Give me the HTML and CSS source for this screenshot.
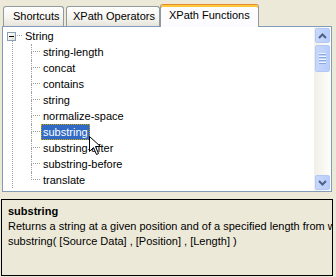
FILE: index.html
```
<!DOCTYPE html>
<html>
<head>
    <title>XPath Builder</title>
    <link rel="stylesheet" href="styles.css">
</head>
<body>

    <!-- Tabs -->
    <div class="tabs">
        <div class="tab tab-short">Shortcuts</div>
        <div class="tab tab-ops">XPath Operators</div>
        <div class="tab tab-funcs active">XPath Functions</div>
    </div>

    <!-- Function tree -->
    <div class="panel">
        <div class="tree">
            <div class="row">
                <span class="expander"><i></i></span>
                <span class="stub"></span>
                <span class="label">String</span>
            </div>
            <div class="branch">
                <div class="children">
                    <div class="row"><span class="conn"><i></i><i></i></span><span class="label">string-length</span></div>
                    <div class="row"><span class="conn"><i></i><i></i></span><span class="label">concat</span></div>
                    <div class="row"><span class="conn"><i></i><i></i></span><span class="label">contains</span></div>
                    <div class="row"><span class="conn"><i></i><i></i></span><span class="label">string</span></div>
                    <div class="row"><span class="conn"><i></i><i></i></span><span class="label">normalize-space</span></div>
                    <div class="row"><span class="conn"><i></i><i></i></span><span class="label selected">substring</span></div>
                    <div class="row"><span class="conn"><i></i><i></i></span><span class="label">substring-after</span></div>
                    <div class="row"><span class="conn"><i></i><i></i></span><span class="label">substring-before</span></div>
                    <div class="row last"><span class="conn"><i></i><i></i></span><span class="label">translate</span></div>
                </div>
            </div>
            <div class="row">
                <span class="expander plus"><i></i></span>
                <span class="stub"></span>
                <span class="label">Node Sequence</span>
            </div>

            <!-- mouse pointer -->
            <svg class="pointer" width="13" height="20" viewBox="0 0 13 20">
                <path d="M0.5 0.5 L0.5 15.5 L4.5 11.5 L7.5 18.5 L9.5 17.5 L6.5 10.5 L11.5 10.5 Z" fill="#fff" stroke="#000" stroke-width="1"/>
            </svg>
        </div>

        <div class="scroll">
            <div class="sbtn">
                <svg width="9" height="6" viewBox="0 0 9 6"><path d="M1 5 L4.5 1.5 L8 5" fill="none" stroke="#4d6185" stroke-width="2"/></svg>
            </div>
            <div class="thumb">
                <span></span><span></span><span></span><span></span>
            </div>
            <div class="track"></div>
            <div class="sbtn">
                <svg width="9" height="6" viewBox="0 0 9 6"><path d="M1 1 L4.5 4.5 L8 1" fill="none" stroke="#4d6185" stroke-width="2"/></svg>
            </div>
        </div>
    </div>

    <!-- Description -->
    <div class="desc">
        <div class="desc-title">substring</div>
        <div class="desc-line">Returns a string at a given position and of a specified length from within the source data</div>
        <div class="desc-line">substring( [Source Data] , [Position] , [Length] )</div>
    </div>

</body>
</html>
```

FILE: styles.css
```
body {
    margin: 0;
    background: #ece9d8;
    font-family: "Liberation Sans", Arial, sans-serif;
    font-size: 11px;
    color: #000;
    width: 336px;
    height: 277px;
    overflow: hidden;
}

/* tabs */
.tabs {
    display: flex;
    align-items: flex-end;
    height: 23px;
    padding-top: 3px;
    padding-left: 3px;
}
.tab {
    box-sizing: border-box;
    height: 20px;
    line-height: 19px;
    border: 1px solid #919b9c;
    border-bottom: none;
    border-radius: 3px 3px 0 0;
    background: linear-gradient(#ffffff, #f4f3ee 60%, #e6e4db);
    white-space: nowrap;
}
.tab-short {
    width: 61px;
    padding-left: 9px;
}
.tab-ops {
    width: 94px;
    margin-left: 2px;
    padding-left: 6px;
}
.tab-funcs {
    width: 99px;
    padding-left: 8px;
}
.tab.active {
    height: 23px;
    line-height: 20px;
    margin-bottom: -1px;
    background: #fcfcfe;
    border-top: 1px solid #e68b2c;
    box-shadow: inset 0 2px #ffc83c;
    position: relative;
    z-index: 1;
}

/* tree panel */
.panel {
    box-sizing: border-box;
    display: flex;
    width: 330px;
    height: 166px;
    margin-left: 2px;
    background: #fff;
    border: 1px solid #7f9db9;
}
.tree {
    flex: 1;
    position: relative;
    overflow: hidden;
    padding: 1px 0 0 4px;
}
.row {
    display: flex;
    align-items: center;
    height: 16px;
    white-space: nowrap;
}
.expander {
    box-sizing: border-box;
    width: 9px;
    height: 9px;
    border: 1px solid #8c9eb4;
    background: linear-gradient(135deg, #ffffff, #dcdcd6);
    display: flex;
    align-items: center;
    justify-content: center;
}
.expander i {
    width: 5px;
    height: 1px;
    background: #000;
}
.stub {
    width: 5px;
    height: 1px;
    margin-left: 1px;
    border-top: 1px dotted #a0a0a0;
}
.label {
    box-sizing: border-box;
    height: 16px;
    line-height: 14px;
    padding: 0 1px;
    border: 1px solid transparent;
    margin-left: 1px;
}
.label.selected {
    background: #316ac5;
    color: #fff;
    border: 1px dotted #c8a000;
}

.branch {
    margin-left: 5px;
    margin-top: -4px;
    padding-top: 4px;
    border-left: 1px dotted #a0a0a0;
}
.children {
    margin-left: 18px;
}
.conn {
    display: flex;
    flex-direction: column;
    align-self: stretch;
    width: 9px;
}
.conn i {
    box-sizing: border-box;
    height: 8px;
    border-left: 1px dotted #a0a0a0;
}
.conn i:first-child {
    border-bottom: 1px dotted #a0a0a0;
}
.row.last .conn i:last-child {
    border-left: none;
}

.pointer {
    position: absolute;
    left: 86px;
    top: 109px;
}

/* scrollbar */
.scroll {
    width: 17px;
    display: flex;
    flex-direction: column;
    background: linear-gradient(to right, #f0efe8, #fdfdfa);
}
.sbtn, .thumb {
    box-sizing: border-box;
    width: 15px;
    margin: 1px 1px 0 1px;
    border: 1px solid #b4c8f6;
    border-radius: 2px;
    background: linear-gradient(to right, #c8d8fc, #b8cdfb);
    display: flex;
    align-items: center;
    justify-content: center;
}
.sbtn {
    height: 15px;
}
.sbtn:last-child {
    margin-bottom: 1px;
}
.thumb {
    height: 27px;
    margin-top: 2px;
    flex-direction: column;
    gap: 1px;
}
.thumb span {
    width: 7px;
    height: 1px;
    background: #eef4fe;
    border-bottom: 1px solid #8da7e0;
}
.track {
    flex: 1;
}

/* description */
.desc {
    box-sizing: border-box;
    width: 332px;
    height: 77px;
    margin: 7px 0 0 1px;
    border: 1px solid #000;
    padding: 4px 0 0 6px;
    overflow: hidden;
    white-space: nowrap;
    line-height: 15px;
}
.desc-title {
    font-weight: bold;
}
```
